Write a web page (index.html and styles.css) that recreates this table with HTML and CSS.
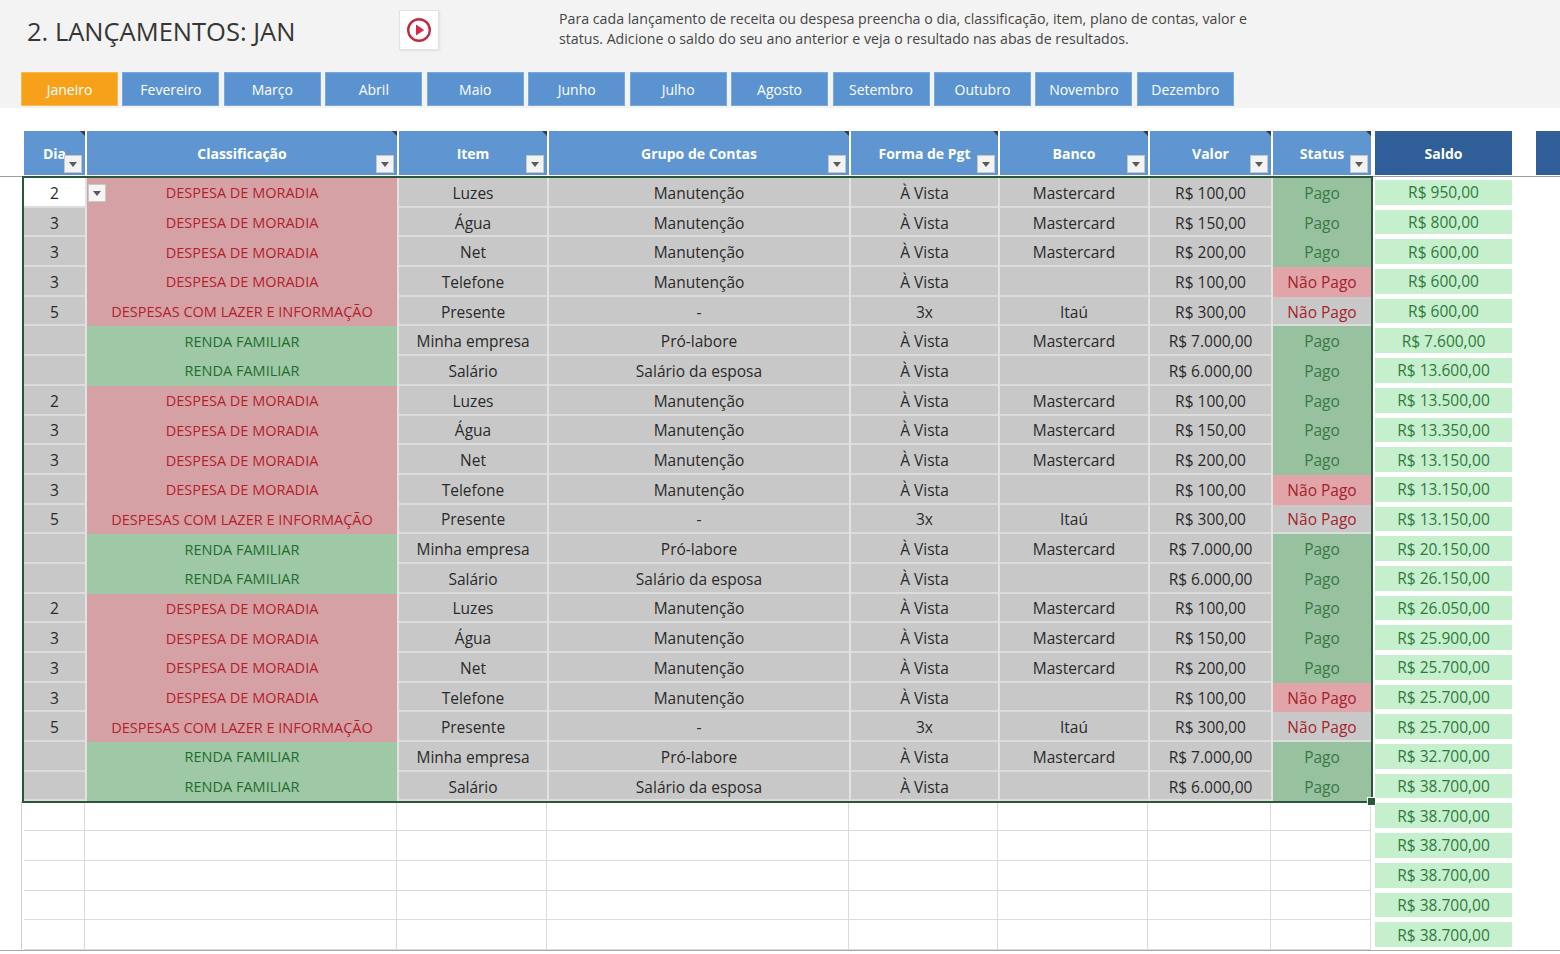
FILE: index.html
```html
<!DOCTYPE html>
<html lang="pt-BR">
<head>
<meta charset="utf-8">
<title>2. Lançamentos: JAN</title>
<link rel="stylesheet" href="styles.css">
</head>
<body>
<header class="top">
  <div class="title-row">
    <h1 class="title">2. LANÇAMENTOS: JAN</h1>
    <button class="play" type="button" aria-label="Vídeo">
      <svg width="28" height="28" viewBox="0 0 28 28"><circle cx="14" cy="14" r="10.8" fill="none" stroke="#c22a42" stroke-width="2.4"/><path d="M11 8.6 L19.2 14 L11 19.4 Z" fill="#d42c47"/></svg>
    </button>
    <p class="desc">Para cada lançamento de receita ou despesa preencha o dia, classificação, item, plano de contas, valor e<br>status. Adicione o saldo do seu ano anterior e veja o resultado nas abas de resultados.</p>
  </div>
  <nav class="tabs">
    <a class="tab active">Janeiro</a>
    <a class="tab">Fevereiro</a>
    <a class="tab">Março</a>
    <a class="tab">Abril</a>
    <a class="tab">Maio</a>
    <a class="tab">Junho</a>
    <a class="tab">Julho</a>
    <a class="tab">Agosto</a>
    <a class="tab">Setembro</a>
    <a class="tab">Outubro</a>
    <a class="tab">Novembro</a>
    <a class="tab">Dezembro</a>
  </nav>
</header>

<main class="sheet">
  <div class="head">
    <div class="hgrid">
      <div class="hc">Dia<span class="flt"></span></div>
      <div class="hc">Classificação<span class="flt"></span></div>
      <div class="hc">Item<span class="flt"></span></div>
      <div class="hc">Grupo de Contas<span class="flt"></span></div>
      <div class="hc">Forma de Pgt<span class="flt"></span></div>
      <div class="hc">Banco<span class="flt"></span></div>
      <div class="hc">Valor<span class="flt"></span></div>
      <div class="hc">Status<span class="flt"></span></div>
    </div>
    <div class="hc saldo-h">Saldo</div>
    <div class="edge"></div>
  </div>
  <div class="rule"></div>

  <div class="body">
    <div class="left">
      <div class="sel">
        <div class="row"><span class="c g first">2</span><span class="c desp">DESPESA DE MORADIA<i class="dd"></i></span><span class="c g">Luzes</span><span class="c g">Manutenção</span><span class="c g">À Vista</span><span class="c g">Mastercard</span><span class="c g">R$ 100,00</span><span class="c pago">Pago</span></div>
        <div class="row"><span class="c g">3</span><span class="c desp">DESPESA DE MORADIA</span><span class="c g">Água</span><span class="c g">Manutenção</span><span class="c g">À Vista</span><span class="c g">Mastercard</span><span class="c g">R$ 150,00</span><span class="c pago">Pago</span></div>
        <div class="row"><span class="c g">3</span><span class="c desp">DESPESA DE MORADIA</span><span class="c g">Net</span><span class="c g">Manutenção</span><span class="c g">À Vista</span><span class="c g">Mastercard</span><span class="c g">R$ 200,00</span><span class="c pago">Pago</span></div>
        <div class="row"><span class="c g">3</span><span class="c desp">DESPESA DE MORADIA</span><span class="c g">Telefone</span><span class="c g">Manutenção</span><span class="c g">À Vista</span><span class="c g"></span><span class="c g">R$ 100,00</span><span class="c naop">Não Pago</span></div>
        <div class="row"><span class="c g">5</span><span class="c desp">DESPESAS COM LAZER E INFORMAÇÃO</span><span class="c g">Presente</span><span class="c g">-</span><span class="c g">3x</span><span class="c g">Itaú</span><span class="c g">R$ 300,00</span><span class="c g red">Não Pago</span></div>
        <div class="row"><span class="c g"></span><span class="c renda">RENDA FAMILIAR</span><span class="c g">Minha empresa</span><span class="c g">Pró-labore</span><span class="c g">À Vista</span><span class="c g">Mastercard</span><span class="c g">R$ 7.000,00</span><span class="c pago">Pago</span></div>
        <div class="row"><span class="c g"></span><span class="c renda">RENDA FAMILIAR</span><span class="c g">Salário</span><span class="c g">Salário da esposa</span><span class="c g">À Vista</span><span class="c g"></span><span class="c g">R$ 6.000,00</span><span class="c pago">Pago</span></div>

        <div class="row"><span class="c g">2</span><span class="c desp">DESPESA DE MORADIA</span><span class="c g">Luzes</span><span class="c g">Manutenção</span><span class="c g">À Vista</span><span class="c g">Mastercard</span><span class="c g">R$ 100,00</span><span class="c pago">Pago</span></div>
        <div class="row"><span class="c g">3</span><span class="c desp">DESPESA DE MORADIA</span><span class="c g">Água</span><span class="c g">Manutenção</span><span class="c g">À Vista</span><span class="c g">Mastercard</span><span class="c g">R$ 150,00</span><span class="c pago">Pago</span></div>
        <div class="row"><span class="c g">3</span><span class="c desp">DESPESA DE MORADIA</span><span class="c g">Net</span><span class="c g">Manutenção</span><span class="c g">À Vista</span><span class="c g">Mastercard</span><span class="c g">R$ 200,00</span><span class="c pago">Pago</span></div>
        <div class="row"><span class="c g">3</span><span class="c desp">DESPESA DE MORADIA</span><span class="c g">Telefone</span><span class="c g">Manutenção</span><span class="c g">À Vista</span><span class="c g"></span><span class="c g">R$ 100,00</span><span class="c naop">Não Pago</span></div>
        <div class="row"><span class="c g">5</span><span class="c desp">DESPESAS COM LAZER E INFORMAÇÃO</span><span class="c g">Presente</span><span class="c g">-</span><span class="c g">3x</span><span class="c g">Itaú</span><span class="c g">R$ 300,00</span><span class="c g red">Não Pago</span></div>
        <div class="row"><span class="c g"></span><span class="c renda">RENDA FAMILIAR</span><span class="c g">Minha empresa</span><span class="c g">Pró-labore</span><span class="c g">À Vista</span><span class="c g">Mastercard</span><span class="c g">R$ 7.000,00</span><span class="c pago">Pago</span></div>
        <div class="row"><span class="c g"></span><span class="c renda">RENDA FAMILIAR</span><span class="c g">Salário</span><span class="c g">Salário da esposa</span><span class="c g">À Vista</span><span class="c g"></span><span class="c g">R$ 6.000,00</span><span class="c pago">Pago</span></div>

        <div class="row"><span class="c g">2</span><span class="c desp">DESPESA DE MORADIA</span><span class="c g">Luzes</span><span class="c g">Manutenção</span><span class="c g">À Vista</span><span class="c g">Mastercard</span><span class="c g">R$ 100,00</span><span class="c pago">Pago</span></div>
        <div class="row"><span class="c g">3</span><span class="c desp">DESPESA DE MORADIA</span><span class="c g">Água</span><span class="c g">Manutenção</span><span class="c g">À Vista</span><span class="c g">Mastercard</span><span class="c g">R$ 150,00</span><span class="c pago">Pago</span></div>
        <div class="row"><span class="c g">3</span><span class="c desp">DESPESA DE MORADIA</span><span class="c g">Net</span><span class="c g">Manutenção</span><span class="c g">À Vista</span><span class="c g">Mastercard</span><span class="c g">R$ 200,00</span><span class="c pago">Pago</span></div>
        <div class="row"><span class="c g">3</span><span class="c desp">DESPESA DE MORADIA</span><span class="c g">Telefone</span><span class="c g">Manutenção</span><span class="c g">À Vista</span><span class="c g"></span><span class="c g">R$ 100,00</span><span class="c naop">Não Pago</span></div>
        <div class="row"><span class="c g">5</span><span class="c desp">DESPESAS COM LAZER E INFORMAÇÃO</span><span class="c g">Presente</span><span class="c g">-</span><span class="c g">3x</span><span class="c g">Itaú</span><span class="c g">R$ 300,00</span><span class="c g red">Não Pago</span></div>
        <div class="row"><span class="c g"></span><span class="c renda">RENDA FAMILIAR</span><span class="c g">Minha empresa</span><span class="c g">Pró-labore</span><span class="c g">À Vista</span><span class="c g">Mastercard</span><span class="c g">R$ 7.000,00</span><span class="c pago">Pago</span></div>
        <div class="row"><span class="c g"></span><span class="c renda">RENDA FAMILIAR</span><span class="c g">Salário</span><span class="c g">Salário da esposa</span><span class="c g">À Vista</span><span class="c g"></span><span class="c g">R$ 6.000,00</span><span class="c pago">Pago</span></div>
      </div>

      <div class="empty">
        <div class="erow"><span></span><span></span><span></span><span></span><span></span><span></span><span></span><span></span></div>
        <div class="erow"><span></span><span></span><span></span><span></span><span></span><span></span><span></span><span></span></div>
        <div class="erow"><span></span><span></span><span></span><span></span><span></span><span></span><span></span><span></span></div>
        <div class="erow"><span></span><span></span><span></span><span></span><span></span><span></span><span></span><span></span></div>
        <div class="erow"><span></span><span></span><span></span><span></span><span></span><span></span><span></span><span></span></div>
      </div>
    </div>

    <div class="saldo">
      <span class="s">R$ 950,00</span>
      <span class="s">R$ 800,00</span>
      <span class="s">R$ 600,00</span>
      <span class="s">R$ 600,00</span>
      <span class="s">R$ 600,00</span>
      <span class="s">R$ 7.600,00</span>
      <span class="s">R$ 13.600,00</span>
      <span class="s">R$ 13.500,00</span>
      <span class="s">R$ 13.350,00</span>
      <span class="s">R$ 13.150,00</span>
      <span class="s">R$ 13.150,00</span>
      <span class="s">R$ 13.150,00</span>
      <span class="s">R$ 20.150,00</span>
      <span class="s">R$ 26.150,00</span>
      <span class="s">R$ 26.050,00</span>
      <span class="s">R$ 25.900,00</span>
      <span class="s">R$ 25.700,00</span>
      <span class="s">R$ 25.700,00</span>
      <span class="s">R$ 25.700,00</span>
      <span class="s">R$ 32.700,00</span>
      <span class="s">R$ 38.700,00</span>
      <span class="s">R$ 38.700,00</span>
      <span class="s">R$ 38.700,00</span>
      <span class="s">R$ 38.700,00</span>
      <span class="s">R$ 38.700,00</span>
      <span class="s">R$ 38.700,00</span>
    </div>
  </div>
  <div class="endline"></div>
</main>
</body>
</html>
```

FILE: styles.css
```css
* { box-sizing: border-box; }

body {
  margin: 0;
  width: 1560px;
  height: 954px;
  overflow: hidden;
  background: #fff;
  font-family: "Open Sans", "Liberation Sans", sans-serif;
  color: #2b2b2b;
}

/* ---------- top area ---------- */
.top {
  background: #f3f3f3;
  height: 108px;
}

.title-row {
  display: flex;
  align-items: flex-start;
  height: 62px;
  padding-left: 27px;
}

.title {
  flex: 0 0 372px;
  margin: 0;
  font-size: 25.5px;
  font-weight: 400;
  line-height: 62px;
  color: #363636;
}

.play {
  flex: 0 0 40px;
  width: 40px;
  height: 40px;
  margin-top: 10px;
  padding: 0;
  border: 1px solid #e1e1e1;
  background: #fff;
  display: flex;
  align-items: center;
  justify-content: center;
  box-shadow: 1px 1px 2px rgba(0, 0, 0, 0.08);
}

.desc {
  margin: 9px 0 0 120px;
  font-size: 14.2px;
  line-height: 20px;
  color: #454545;
  white-space: nowrap;
}

.tabs {
  display: flex;
  gap: 4.45px;
  padding-left: 21px;
  margin-top: 10px;
}

.tab {
  width: 97px;
  height: 34px;
  display: flex;
  align-items: center;
  justify-content: center;
  background: #5b93d1;
  border: 1px solid #79a8dd;
  color: #fff;
  font-size: 14px;
}

.tab.active {
  background: #f7a11b;
  border-color: #f9b94f;
}

/* ---------- sheet ---------- */
.sheet {
  margin-top: 23px;
}

.head {
  display: flex;
  height: 44px;
  padding-left: 24px;
}

.hgrid,
.row,
.erow {
  display: grid;
  grid-template-columns: 61px 310px 148px 300px 147px 148px 121px 98px;
  column-gap: 2px;
}

.hgrid { width: 1347px; }

.hc {
  position: relative;
  display: flex;
  align-items: center;
  justify-content: center;
  background: #5f96d2;
  color: #fff;
  font-size: 14px;
  font-weight: 700;
}

.hgrid .hc::after {
  content: "";
  position: absolute;
  top: 0;
  right: 0;
  border-top: 5px solid #3a3a3a;
  border-left: 5px solid transparent;
}

.flt {
  position: absolute;
  right: 3px;
  bottom: 2px;
  width: 18px;
  height: 18px;
  background: #f3f3f3;
  border: 1px solid #c6c6c6;
}

.flt::before,
.dd::before {
  content: "";
  position: absolute;
  left: 4px;
  top: 6px;
  border-top: 5px solid #5a5a5a;
  border-left: 4px solid transparent;
  border-right: 4px solid transparent;
}

.saldo-h {
  width: 137px;
  margin-left: 4px;
  background: #2f5e98;
}

.edge {
  width: 24px;
  margin-left: 24px;
  background: #2f5e98;
}

.rule {
  height: 1px;
  margin: 1px 0 1px;
  background: #9e9e9e;
}

.body {
  display: flex;
  align-items: flex-start;
  gap: 4px;
  padding-left: 24px;
}

.left { width: 1347px; }

.sel {
  position: relative;
  outline: 2px solid #2c553c;
}

.sel::after {
  content: "";
  position: absolute;
  right: -5px;
  bottom: -5px;
  width: 7px;
  height: 7px;
  background: #2c553c;
  border: 1px solid #fff;
}

.row {
  height: 29.7px;
  background: #e2e2e2;
}

.c {
  position: relative;
  display: flex;
  align-items: center;
  justify-content: center;
  font-size: 15.5px;
  white-space: nowrap;
}

.g {
  background: #c8c8c8;
  border-bottom: 2px solid #dcdcdc;
  padding-top: 2px;
  color: #2a2a2a;
}

.g.first { background: #fff; }

.g.red { color: #a8222e; }

.desp {
  background: #d6a1a5;
  color: #b1212d;
  font-size: 14.5px;
}

.renda {
  background: #9fc9a6;
  color: #226c2f;
  font-size: 14.5px;
}

.pago {
  background: #98c1a0;
  color: #377844;
}

.naop {
  background: #e1a4a8;
  color: #a3222d;
}

.dd {
  position: absolute;
  left: 1px;
  top: 6px;
  width: 18px;
  height: 18px;
  background: #f5f5f5;
  border: 1px solid #c8c8c8;
}

.empty {
  margin-left: -3px;
  padding-left: 2px;
  border-left: 1px solid #d0d0d0;
}

.erow {
  height: 29.7px;
  border-bottom: 1px solid #dadada;
}

.erow span { border-right: 1px solid #dadada; }

.saldo {
  display: flex;
  flex-direction: column;
  width: 137px;
}

.s {
  height: 29.7px;
  padding: 2px 0 3px;
  display: flex;
  align-items: center;
  justify-content: center;
  background: #c6efce;
  background-clip: content-box;
  color: #2f7a3b;
  font-size: 15.5px;
}

.endline {
  height: 1px;
  background: #a8a8a8;
}
```
